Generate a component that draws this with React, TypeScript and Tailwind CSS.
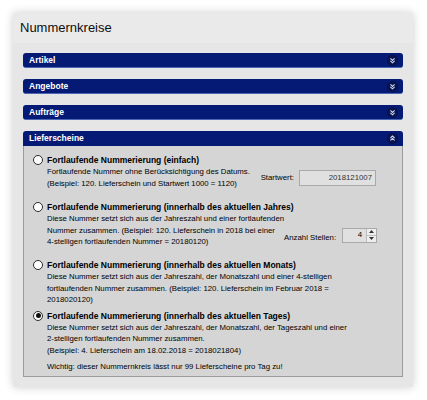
import React from 'react'

const FONT = { fontFamily: '"Liberation Sans", Arial, sans-serif' }

function Chevrons({ up }: { up?: boolean }) {
  return (
    <svg width="11" height="11" viewBox="0 0 11 11" className="shrink-0">
      <circle cx="5.5" cy="5.5" r="5" fill="#0a1650" stroke="#07103d" strokeWidth="0.8" />
      {up ? (
        <g fill="none" stroke="#c9d5f5" strokeWidth="1.1">
          <polyline points="3.4,5 5.5,3 7.6,5" />
          <polyline points="3.4,7.4 5.5,5.4 7.6,7.4" />
        </g>
      ) : (
        <g fill="none" stroke="#c9d5f5" strokeWidth="1.1">
          <polyline points="3.4,3.4 5.5,5.4 7.6,3.4" />
          <polyline points="3.4,5.8 5.5,7.8 7.6,5.8" />
        </g>
      )}
    </svg>
  )
}

function Bar({ label, open }: { label: string; open?: boolean }) {
  return (
    <div
      className={`flex h-[15px] items-center justify-between bg-[#041a74] pl-[6px] pr-[5px] text-[8.5px] font-bold text-white ${
        open ? 'rounded-t-[3px]' : 'rounded-[3px] border-b border-[#4b66b5]'
      }`}
    >
      <span className="leading-none">{label}</span>
      <Chevrons up={open} />
    </div>
  )
}

function Radio({ checked }: { checked?: boolean }) {
  return (
    <span className="flex h-[10px] w-[10px] shrink-0 items-center justify-center rounded-full border border-[#2b2b2b] bg-white">
      {checked && <span className="h-[5px] w-[5px] rounded-full bg-[#111]" />}
    </span>
  )
}

function Option({
  title,
  lines,
  checked,
  className,
  side,
}: {
  title: string
  lines: string[]
  checked?: boolean
  className?: string
  side?: React.ReactNode
}) {
  return (
    <div className={className}>
      <div className="flex h-[12px] items-center gap-[4px]">
        <Radio checked={checked} />
        <span className="whitespace-nowrap text-[8.5px] font-bold leading-[12px]">{title}</span>
      </div>
      <div className="flex items-end pl-[14px]">
        <div className="flex-1 text-[7.8px] leading-[11.5px]">
          {lines.map((l, i) => (
            <div key={i} className="whitespace-nowrap">
              {l}
            </div>
          ))}
        </div>
        {side}
      </div>
    </div>
  )
}

export default function App() {
  return (
    <div className="h-[400px] w-[427px] bg-white pl-[13px] pt-[13px] text-black" style={FONT}>
      <div className="w-[400px] bg-[#e6e6e6] shadow-[0_0_9px_rgba(0,0,0,0.2)]">
        <div className="flex h-[30px] items-center bg-[#eaeaea] px-[7px] text-[13px] text-[#0d0d0d]">
          Nummernkreise
        </div>

        <div className="flex flex-col gap-[11px] px-[10px] pb-[10px] pt-[10px]">
          <Bar label="Artikel" />
          <Bar label="Angebote" />
          <Bar label="Aufträge" />

          <div>
            <Bar label="Lieferscheine" open />
            <div className="h-[231px] border border-t-0 border-[#9c9c9c] bg-[#d5d5d5] pl-[9px] pr-[26px] pt-[8px]">
              <Option
                title="Fortlaufende Nummerierung (einfach)"
                lines={[
                  'Fortlaufende Nummer ohne Berücksichtigung des Datums.',
                  '(Beispiel: 120. Lieferschein und Startwert 1000 = 1120)',
                ]}
                side={
                  <div className="mb-[3px] flex items-center gap-[5px]">
                    <span className="whitespace-nowrap text-[7.8px]">Startwert:</span>
                    <div className="flex h-[16px] w-[77px] items-center justify-end border border-[#a9a9a9] bg-[#e0e0e0] pr-[3px] text-[7.8px] text-[#333]">
                      2018121007
                    </div>
                  </div>
                }
              />

              <Option
                className="mt-[12px]"
                title="Fortlaufende Nummerierung (innerhalb des aktuellen Jahres)"
                lines={[
                  'Diese Nummer setzt sich aus der Jahreszahl und einer fortlaufenden',
                  'Nummer zusammen. (Beispiel: 120. Lieferschein in 2018 bei einer',
                  '4-stelligen fortlaufenden Nummer = 20180120)',
                ]}
                side={
                  <div className="mb-[5px] flex shrink-0 items-end gap-[6px]">
                    <span className="whitespace-nowrap text-[7.8px] leading-[11px]">Anzahl Stellen:</span>
                    <div className="flex h-[15px] w-[35px] border border-[#a9a9a9] bg-[#e0e0e0]">
                      <div className="flex flex-1 items-center justify-end pr-[4px] text-[7.8px]">4</div>
                      <div className="flex w-[10px] flex-col border-l border-[#bdbdbd]">
                        <div className="flex flex-1 items-center justify-center border-b border-[#bdbdbd] bg-[#eeeeee]">
                          <svg width="5" height="3" viewBox="0 0 5 3">
                            <polygon points="0,3 2.5,0 5,3" fill="#333" />
                          </svg>
                        </div>
                        <div className="flex flex-1 items-center justify-center bg-[#eeeeee]">
                          <svg width="5" height="3" viewBox="0 0 5 3">
                            <polygon points="0,0 2.5,3 5,0" fill="#333" />
                          </svg>
                        </div>
                      </div>
                    </div>
                  </div>
                }
              />

              <Option
                className="mt-[11.5px]"
                title="Fortlaufende Nummerierung (innerhalb des aktuellen Monats)"
                lines={[
                  'Diese Nummer setzt sich aus der Jahreszahl, der Monatszahl und einer 4-stelligen',
                  'fortlaufenden Nummer zusammen. (Beispiel: 120. Lieferschein im Februar 2018 =',
                  '2018020120)',
                ]}
              />

              <Option
                className="mt-[4px]"
                checked
                title="Fortlaufende Nummerierung (innerhalb des aktuellen Tages)"
                lines={[
                  'Diese Nummer setzt sich aus der Jahreszahl, der Monatszahl, der Tageszahl und einer',
                  '2-stelligen fortlaufenden Nummer zusammen.',
                  '(Beispiel: 4. Lieferschein am 18.02.2018 = 2018021804)',
                ]}
              />

              <div className="mt-[5px] pl-[14px] text-[7.8px] leading-[11.5px]">
                Wichtig: dieser Nummernkreis lässt nur 99 Lieferscheine pro Tag zu!
              </div>
            </div>
          </div>
        </div>
      </div>
    </div>
  )
}
